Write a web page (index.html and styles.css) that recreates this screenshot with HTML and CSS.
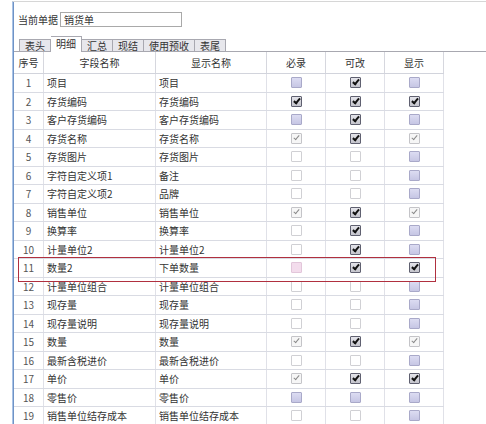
FILE: index.html
```html
<!DOCTYPE html>
<html>
<head>
<meta charset="utf-8">
<link rel="stylesheet" href="styles.css">
</head>
<body>
<div class="frame">
  <div class="form">
    <span class="label">当前单据</span>
    <div class="input">销货单</div>
  </div>
  <div class="tabs">
    <div class="tab">表头</div>
    <div class="tab active">明细</div>
    <div class="tab">汇总</div>
    <div class="tab">现结</div>
    <div class="tab">使用预收</div>
    <div class="tab">表尾</div>
  </div>
  <div class="gridwrap">
    <div class="grid">
      <div class="row head"><div>序号</div><div>字段名称</div><div>显示名称</div><div>必录</div><div>可改</div><div>显示</div></div>
      <div class="row"><div class="n">1</div><div class="t">项目</div><div class="t">项目</div><div><i class="cb l"></i></div><div><i class="cb d"></i></div><div><i class="cb l"></i></div></div>
      <div class="row"><div class="n">2</div><div class="t">存货编码</div><div class="t">存货编码</div><div><i class="cb d"></i></div><div><i class="cb d"></i></div><div><i class="cb d"></i></div></div>
      <div class="row"><div class="n">3</div><div class="t">客户存货编码</div><div class="t">客户存货编码</div><div><i class="cb l"></i></div><div><i class="cb d"></i></div><div><i class="cb l"></i></div></div>
      <div class="row"><div class="n">4</div><div class="t">存货名称</div><div class="t">存货名称</div><div><i class="cb g"></i></div><div><i class="cb d"></i></div><div><i class="cb g"></i></div></div>
      <div class="row"><div class="n">5</div><div class="t">存货图片</div><div class="t">存货图片</div><div><i class="cb e"></i></div><div><i class="cb e"></i></div><div><i class="cb l"></i></div></div>
      <div class="row"><div class="n">6</div><div class="t">字符自定义项1</div><div class="t">备注</div><div><i class="cb e"></i></div><div><i class="cb e"></i></div><div><i class="cb l"></i></div></div>
      <div class="row"><div class="n">7</div><div class="t">字符自定义项2</div><div class="t">品牌</div><div><i class="cb e"></i></div><div><i class="cb e"></i></div><div><i class="cb l"></i></div></div>
      <div class="row"><div class="n">8</div><div class="t">销售单位</div><div class="t">销售单位</div><div><i class="cb g"></i></div><div><i class="cb d"></i></div><div><i class="cb g"></i></div></div>
      <div class="row"><div class="n">9</div><div class="t">换算率</div><div class="t">换算率</div><div><i class="cb e"></i></div><div><i class="cb d"></i></div><div><i class="cb l"></i></div></div>
      <div class="row"><div class="n">10</div><div class="t">计量单位2</div><div class="t">计量单位2</div><div><i class="cb e"></i></div><div><i class="cb d"></i></div><div><i class="cb l"></i></div></div>
      <div class="row"><div class="n">11</div><div class="t">数量2</div><div class="t">下单数量</div><div><i class="cb p"></i></div><div><i class="cb d"></i></div><div><i class="cb d"></i></div></div>
      <div class="row"><div class="n">12</div><div class="t">计量单位组合</div><div class="t">计量单位组合</div><div><i class="cb e"></i></div><div><i class="cb e"></i></div><div><i class="cb l"></i></div></div>
      <div class="row"><div class="n">13</div><div class="t">现存量</div><div class="t">现存量</div><div><i class="cb e"></i></div><div><i class="cb e"></i></div><div><i class="cb l"></i></div></div>
      <div class="row"><div class="n">14</div><div class="t">现存量说明</div><div class="t">现存量说明</div><div><i class="cb e"></i></div><div><i class="cb e"></i></div><div><i class="cb l"></i></div></div>
      <div class="row"><div class="n">15</div><div class="t">数量</div><div class="t">数量</div><div><i class="cb g"></i></div><div><i class="cb d"></i></div><div><i class="cb g"></i></div></div>
      <div class="row"><div class="n">16</div><div class="t">最新含税进价</div><div class="t">最新含税进价</div><div><i class="cb e"></i></div><div><i class="cb e"></i></div><div><i class="cb l"></i></div></div>
      <div class="row"><div class="n">17</div><div class="t">单价</div><div class="t">单价</div><div><i class="cb g"></i></div><div><i class="cb d"></i></div><div><i class="cb d"></i></div></div>
      <div class="row"><div class="n">18</div><div class="t">零售价</div><div class="t">零售价</div><div><i class="cb l"></i></div><div><i class="cb l"></i></div><div><i class="cb l"></i></div></div>
      <div class="row"><div class="n">19</div><div class="t">销售单位结存成本</div><div class="t">销售单位结存成本</div><div><i class="cb e"></i></div><div><i class="cb e"></i></div><div><i class="cb l"></i></div></div>
    </div>
    <div class="highlight"></div>
  </div>
</div>
</body>
</html>
```

FILE: styles.css
```css
html, body {
  margin: 0;
  padding: 0;
  background: #fff;
  overflow: hidden;
}
body {
  font-family: "Noto Sans CJK SC", "Noto Sans", sans-serif;
  font-size: 10px;
  color: #333;
  width: 486px;
  height: 424px;
}
.frame {
  margin: 1px 0 0 12px;
  height: 423px;
  border-left: 1px solid #a9c3e6;
  box-shadow: inset 1px 0 0 #6f93c6;
  border-top: 1px solid #d6d6d6;
  padding-left: 1px;
  box-sizing: border-box;
}
.form {
  display: flex;
  align-items: center;
  margin-top: 10px;
  padding-left: 4px;
  height: 15px;
}
.label {
  width: 42px;
  line-height: 15px;
}
.input {
  width: 122px;
  height: 15px;
  box-sizing: border-box;
  border: 1px solid #a9a9a9;
  padding-left: 3px;
  line-height: 13px;
}
.tabs {
  display: flex;
  align-items: flex-end;
  height: 15px;
  margin-top: 9px;
  padding-left: 5px;
}
.tab {
  height: 12px;
  box-sizing: border-box;
  border: 1px solid #a8a8b0;
  border-bottom: none;
  border-left: none;
  background: #e7e7ec;
  padding: 0 5px;
  line-height: 11px;
  color: #333;
}
.tab:first-child {
  border-left: 1px solid #a8a8b0;
}
.tab.active {
  height: 16px;
  margin-bottom: -1px;
  background: #fff;
  position: relative;
  z-index: 1;
  line-height: 14px;
  padding: 0 5px;
}
.gridwrap {
  position: relative;
  border-top: 1px solid #a8a8b0;
}
.grid {
  width: 430px;
}
.row {
  display: grid;
  grid-template-columns: 30px 112px 111px 59px 59px 59px;
  height: 18.5px;
  box-sizing: border-box;
  border-bottom: 1px solid #d9dbe3;
}
.row.head {
  height: 22px;
  border-bottom: 1px solid #d2d4dc;
}
.row > div {
  border-right: 1px solid #e0e1e8;
  display: flex;
  align-items: center;
  justify-content: center;
  overflow: hidden;
  white-space: nowrap;
}
.row.head > div {
  border-right-color: #d6d7de;
  color: #333;
}
.row > div.t {
  justify-content: flex-start;
  padding-left: 3px;
}
.row > div.n {
  color: #555;
}
.cb {
  display: block;
  width: 11px;
  height: 11px;
  box-sizing: border-box;
  border: 1px solid #d0d0d4;
  background: #fff;
  border-radius: 1px;
  position: relative;
}
.cb.l {
  border-color: #a9a9c9;
  background: linear-gradient(#dcdcf2, #c6c6e4);
}
.cb.p {
  border-color: #e2c6da;
  background: #f3dcec;
}
.cb.d {
  border-color: #5f6070;
  background: linear-gradient(#e4e4ea, #c4c4cc);
}
.cb.g {
  border-color: #c4c4c8;
  background: #f6f6f6;
}
.cb.d::after, .cb.g::after {
  content: "";
  position: absolute;
  left: 3px;
  top: 0px;
  width: 2px;
  height: 5px;
  border-right: 2px solid #111;
  border-bottom: 2px solid #111;
  transform: rotate(40deg);
}
.cb.g::after {
  border-right: 1.5px solid #8a8a8a;
  border-bottom: 1.5px solid #8a8a8a;
}
.highlight {
  position: absolute;
  left: 4px;
  top: 205px;
  width: 418px;
  height: 25px;
  box-sizing: border-box;
  border: 1px solid #b0303f;
  pointer-events: none;
}
```
